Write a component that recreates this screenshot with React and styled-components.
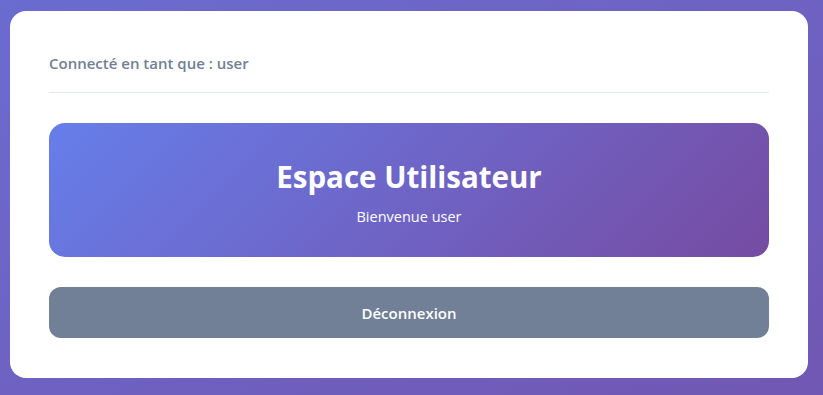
import styled, { createGlobalStyle } from "styled-components";

const GlobalStyle = createGlobalStyle`
  * {
    box-sizing: border-box;
  }
  body {
    margin: 0;
    font-family: "Open Sans", "Noto Sans", sans-serif;
    background: linear-gradient(to bottom right, #6b6cd0, #7157b3);
    min-height: 100vh;
  }
`;

const user = "user";

const App = () => {
  return (
    <>
      <GlobalStyle />
      <Page>
        <Card>
          <Header>
            <UserInfo>Connecté en tant que : {user}</UserInfo>
          </Header>
          <Banner>
            <Title>Espace Utilisateur</Title>
            <Welcome>Bienvenue {user}</Welcome>
          </Banner>
          <LogoutButton>Déconnexion</LogoutButton>
        </Card>
      </Page>
    </>
  );
};

export default App;

const Page = styled.div`
  padding: 11px 15px 17px 10px;
`;

const Card = styled.div`
  display: flex;
  flex-direction: column;
  width: 798px;
  background-color: #ffffff;
  border-radius: 16px;
  padding: 40px 39px;
`;

const Header = styled.div`
  padding-bottom: 17px;
  border-bottom: 1px solid #e2e8f0;
`;

const UserInfo = styled.span`
  display: block;
  font-size: 15px;
  line-height: 24px;
  font-weight: 600;
  color: #718096;
`;

const Banner = styled.div`
  display: flex;
  flex-direction: column;
  align-items: center;
  gap: 9px;
  margin-top: 30px;
  padding: 34px 20px 29px;
  border-radius: 16px;
  background: linear-gradient(135deg, #667eea 0%, #764ba2 100%);
  color: #ffffff;
`;

const Title = styled.h1`
  margin: 0;
  font-size: 29.5px;
  line-height: 40px;
  font-weight: 700;
`;

const Welcome = styled.p`
  margin: 0;
  font-size: 14.5px;
  line-height: 22px;
`;

const LogoutButton = styled.button`
  margin-top: 30px;
  height: 51px;
  border: none;
  border-radius: 12px;
  background-color: #718096;
  color: #ffffff;
  font-family: inherit;
  font-size: 15px;
  font-weight: 600;
  cursor: pointer;
`;
